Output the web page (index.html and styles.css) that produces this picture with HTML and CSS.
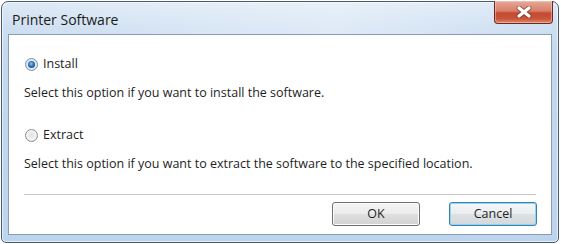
FILE: index.html
```html
<!DOCTYPE html>
<html>
<head>
<meta charset="utf-8">
<link rel="stylesheet" href="styles.css">
</head>
<body>
<div class="window">
  <div class="titlebar">
    <div class="title">Printer Software</div>
    <div class="close">
      <svg width="18" height="12" viewBox="0 0 18 12">
        <path d="M4 2 L14 10 M14 2 L4 10" stroke="#4a2820" stroke-width="5" fill="none" stroke-linecap="round" opacity="0.5"/>
        <path d="M4 2 L14 10 M14 2 L4 10" stroke="#ffffff" stroke-width="3.2" fill="none" stroke-linecap="round"/>
      </svg>
    </div>
  </div>
  <div class="client">
    <div class="option">
      <span class="radio checked"><span class="dot"></span></span>
      <span class="label">Install</span>
    </div>
    <div class="desc">Select this option if you want to install the software.</div>
    <div class="option second">
      <span class="radio"></span>
      <span class="label">Extract</span>
    </div>
    <div class="desc">Select this option if you want to extract the software to the specified location.</div>
    <div class="separator"></div>
    <div class="buttons">
      <div class="btn">OK</div>
      <div class="btn default">Cancel</div>
    </div>
  </div>
</div>
</body>
</html>
```
FILE: styles.css
```css
html, body {
  margin: 0;
  padding: 0;
  background: #ffffff;
}
body {
  font-family: "Open Sans", "Noto Sans", sans-serif;
  font-size: 12.5px;
  color: #1e1e1e;
}
.window {
  margin: 1px 0 0 1px;
  width: 556px;
  height: 240px;
  border: 1px solid #4a5a6c;
  border-radius: 7px 7px 5px 5px;
  background: linear-gradient(180deg, #dde9f6 0%, #cfe0f2 10%, #c4d9ef 20%, #bcd4ee 100%);
  display: flex;
  flex-direction: column;
  box-shadow: inset 0 0 0 1px rgba(255,255,255,0.6);
}
.titlebar {
  height: 32px;
  display: flex;
  justify-content: space-between;
  align-items: flex-start;
  background: linear-gradient(90deg, rgba(255,255,255,0) 0%, rgba(255,255,255,0.25) 40%, rgba(255,255,255,0.35) 60%, rgba(255,255,255,0) 100%);
  border-radius: 6px 6px 0 0;
}
.title {
  padding: 10px 0 0 10px;
  font-size: 14px;
  line-height: 16px;
  color: #1a1a1a;
}
.close {
  width: 57px;
  height: 22px;
  margin: -1px 5px 0 0;
  border: 1px solid #6b2a20;
  border-top: none;
  border-radius: 0 0 4px 4px;
  background: linear-gradient(180deg, #e8a796 0%, #d9806c 45%, #c24a30 55%, #c8553a 80%, #e08a6a 100%);
  display: flex;
  align-items: center;
  justify-content: center;
  box-shadow: inset 0 0 0 1px rgba(255,220,210,0.45);
}
.close svg {
  display: block;
}
.client {
  flex: 1;
  margin: 0 6px 7px 6px;
  border: 1px solid #8a9cb2;
  background: #ffffff;
  padding: 21px 15px 0 15px;
  display: flex;
  flex-direction: column;
}
.option {
  display: flex;
  align-items: center;
  height: 16px;
  line-height: 16px;
}
.option.second {
  margin-top: 26px;
}
.radio {
  width: 11px;
  height: 11px;
  margin-left: 1px;
  border-radius: 50%;
  border: 1px solid #8e8f8f;
  background: radial-gradient(circle at 50% 45%, #e0e0e0 0%, #f4f4f4 55%, #d4d4d4 100%);
  display: flex;
  align-items: center;
  justify-content: center;
  flex: none;
}
.radio.checked {
  border-color: #7b8ea3;
  background: radial-gradient(circle, #eaf2fb 0%, #d6e2ee 100%);
}
.dot {
  width: 7px;
  height: 7px;
  border-radius: 50%;
  background: radial-gradient(circle at 45% 40%, #8fd0f5 0%, #2e6fb3 45%, #1b3f70 100%);
}
.label {
  margin-left: 5px;
}
.desc {
  margin-top: 13px;
  height: 16px;
  line-height: 16px;
  white-space: nowrap;
}
.separator {
  margin-top: 22px;
  height: 1px;
  background: #c6c6c6;
  border-bottom: 1px solid #ffffff;
}
.buttons {
  margin-top: 6px;
  display: flex;
  justify-content: flex-end;
  gap: 29px;
  margin-right: -1px;
}
.btn {
  width: 86px;
  height: 22px;
  border: 1px solid #707070;
  border-radius: 3px;
  background: linear-gradient(180deg, #f4f4f4 0%, #ececec 48%, #dfdfdf 52%, #d2d2d2 100%);
  box-shadow: inset 0 0 0 1px #fcfcfc;
  display: flex;
  align-items: center;
  justify-content: center;
  line-height: 16px;
  color: #1e1e1e;
}
.btn.default {
  border-color: #3c7fb1;
  box-shadow: inset 0 0 0 1px #8fd6f3;
  background: linear-gradient(180deg, #f4f6f8 0%, #ebeef0 48%, #dde1e4 52%, #d3d8dc 100%);
}
```
